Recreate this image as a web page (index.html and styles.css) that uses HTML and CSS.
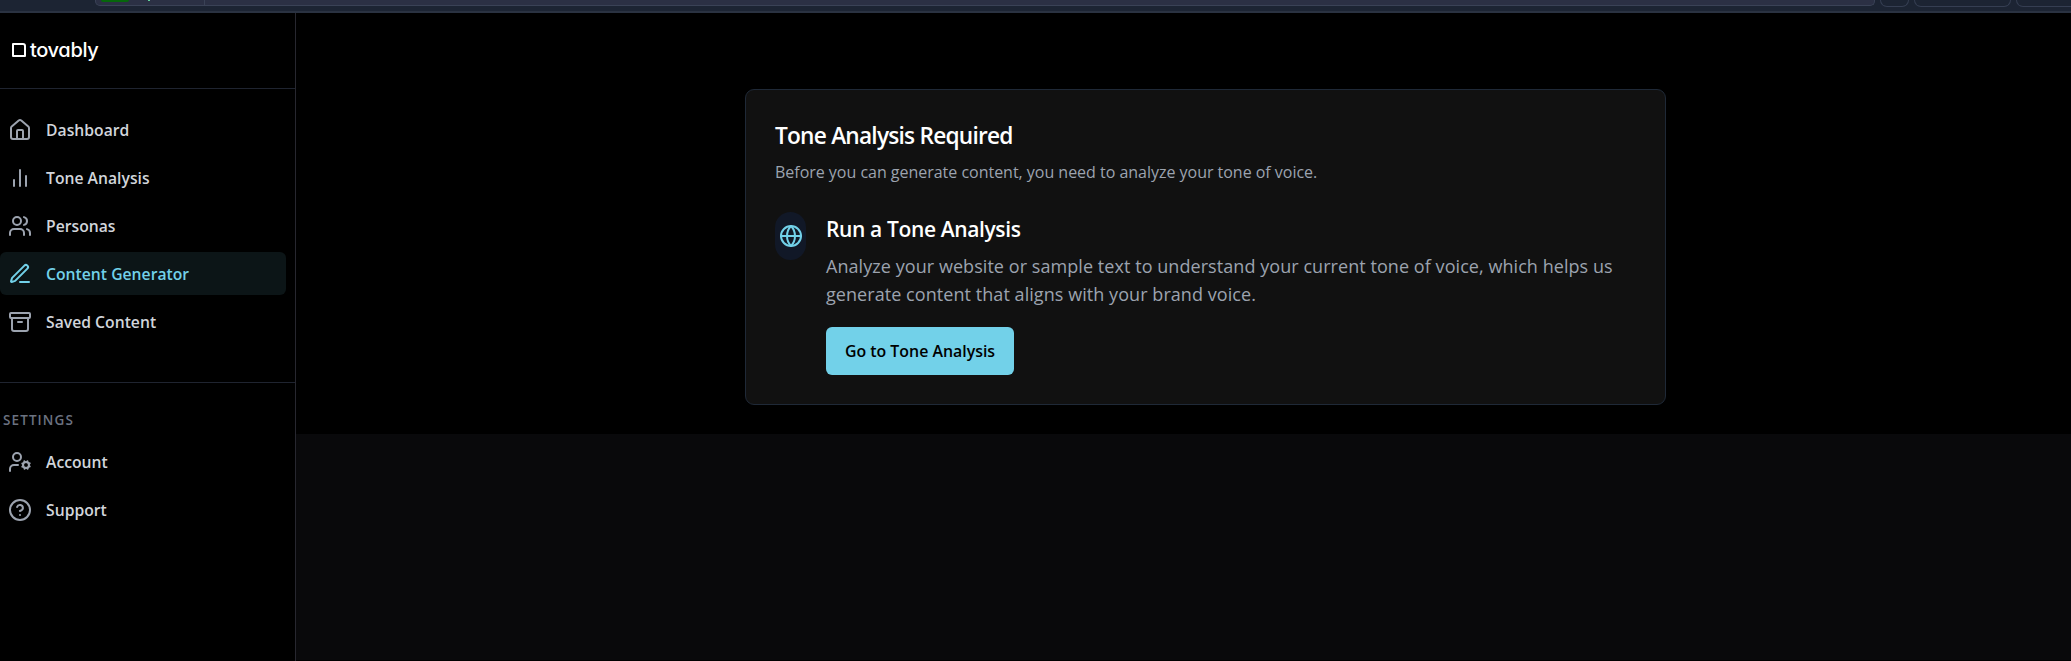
FILE: index.html
```html
<!DOCTYPE html>
<html lang="en">
<head>
<meta charset="utf-8">
<title>Tovably</title>
<link rel="stylesheet" href="styles.css">
</head>
<body>
<div class="browser-bar">
  <div class="address"><span class="secure"></span><span class="site-mark"></span><span class="url"></span></div>
  <span class="chip chip-small"></span><span class="chip chip-wide"></span><span class="chip chip-wide"></span>
</div>
<div class="app">
  <aside class="sidebar">
    <div class="brand"><span class="brand-mark"></span><span class="brand-name">tovably</span></div>
    <nav class="nav">
      <a class="item"><svg class="icon" viewBox="0 0 24 24"><path d="M15 21v-8a1 1 0 0 0-1-1h-4a1 1 0 0 0-1 1v8"/><path d="M3 10a2 2 0 0 1 .709-1.528l7-5.999a2 2 0 0 1 2.582 0l7 5.999A2 2 0 0 1 21 10v9a2 2 0 0 1-2 2H5a2 2 0 0 1-2-2z"/></svg><span>Dashboard</span></a>
      <a class="item"><svg class="icon" viewBox="0 0 24 24"><path d="M18 20V10M12 20V4M6 20v-6"/></svg><span>Tone Analysis</span></a>
      <a class="item"><svg class="icon" viewBox="0 0 24 24"><path d="M16 21v-2a4 4 0 0 0-4-4H6a4 4 0 0 0-4 4v2"/><circle cx="9" cy="7" r="4"/><path d="M22 21v-2a4 4 0 0 0-3-3.87M16 3.13a4 4 0 0 1 0 7.75"/></svg><span>Personas</span></a>
      <a class="item active"><svg class="icon" viewBox="0 0 24 24"><path d="M12 20h9"/><path d="M16.376 3.622a1 1 0 0 1 3.002 3.002L7.368 18.635a2 2 0 0 1-.855.506l-2.872.838a.5.5 0 0 1-.62-.62l.838-2.872a2 2 0 0 1 .506-.854z"/></svg><span>Content Generator</span></a>
      <a class="item"><svg class="icon" viewBox="0 0 24 24"><rect x="2" y="3" width="20" height="5" rx="1"/><path d="M4 8v11a2 2 0 0 0 2 2h12a2 2 0 0 0 2-2V8M10 12h4"/></svg><span>Saved Content</span></a>
    </nav>
    <div class="settings">
      <h2 class="settings-title">SETTINGS</h2>
      <a class="item"><svg class="icon" viewBox="0 0 24 24"><circle cx="18" cy="15" r="3"/><circle cx="9" cy="7" r="4"/><path d="M10 15H6a4 4 0 0 0-4 4v2M21.7 16.4l-.9-.3M15.2 13.9l-.9-.3M16.6 18.7l.3-.9M19.1 12.2l.3-.9M19.6 18.7l-.4-1M16.8 12.3l-.4-1M14.3 16.6l1-.4M20.7 13.8l1-.4"/></svg><span>Account</span></a>
      <a class="item"><svg class="icon" viewBox="0 0 24 24"><circle cx="12" cy="12" r="10"/><path d="M9.09 9a3 3 0 0 1 5.83 1c0 2-3 3-3 3M12 17h.01"/></svg><span>Support</span></a>
    </div>
  </aside>
  <main class="main">
    <div class="stage">
      <section class="card">
        <h1 class="title">Tone Analysis Required</h1>
        <p class="lead">Before you can generate content, you need to analyze your tone of voice.</p>
        <div class="step">
          <div class="pill"><svg class="icon" viewBox="0 0 24 24"><circle cx="12" cy="12" r="10"/><path d="M12 2a14.5 14.5 0 0 0 0 20 14.5 14.5 0 0 0 0-20M2 12h20"/></svg></div>
          <div class="step-body">
            <h2 class="step-title">Run a Tone Analysis</h2>
            <p class="copy">Analyze your website or sample text to understand your current tone of voice, which helps us<br>generate content that aligns with your brand voice.</p>
            <button class="button">Go to Tone Analysis</button>
          </div>
        </div>
      </section>
    </div>
  </main>
</div>
</body>
</html>
```
FILE: styles.css
```css
* { box-sizing: border-box; }
body { margin: 0; height: 661px; overflow: hidden; display: flex; flex-direction: column; background: #000; font-family: "Open Sans", "Noto Sans", sans-serif; color: #fff; }
h1, h2, p { margin: 0; }
.browser-bar { height: 13px; flex: none; display: flex; align-items: flex-start; background: #1c2433; border-bottom: 2px solid #2a3241; padding-left: 95px; overflow: hidden; }
.address { width: 1780px; height: 6px; flex: none; display: flex; background: #2b3044; border: 1px solid #3a4256; border-top: 0; border-radius: 0 0 5px 5px; margin-right: 5px; }
.secure { width: 28px; height: 2px; margin-left: 5px; background: #06660c; border-radius: 0 0 4px 4px; }
.site-mark { width: 2px; height: 1px; margin-left: 19px; background: #5fd39a; }
.url { width: 1px; height: 6px; margin-left: 54px; background: #3a4256; }
.chip { height: 7px; flex: none; border: 1px solid #353e52; border-top: 0; border-radius: 0 0 7px 7px; margin-right: 5px; }
.chip-small { width: 29px; }
.chip-wide { width: 97px; }
.app { flex: 1; display: flex; min-height: 0; }
.sidebar { width: 296px; flex: none; border-right: 1px solid #27272f; }
.brand { height: 76px; display: flex; align-items: center; gap: 4px; padding: 0 0 1px 12px; border-bottom: 1px solid #1f2430; }
.brand-mark { width: 14px; height: 14px; border: 2px solid #fff; border-radius: 1px 3px 1px 1px; }
.brand-name { font: 500 20px/24px Inter, sans-serif; font-feature-settings: "cv11"; letter-spacing: -0.35px; }
.nav { height: 294px; padding: 19px 9px 0 0; display: flex; flex-direction: column; gap: 5px; border-bottom: 1px solid #1f2430; }
.item { height: 43px; display: flex; align-items: center; gap: 14px; padding-left: 8px; border-radius: 6px; color: #d1d5db; font-size: 15.7px; font-weight: 600; letter-spacing: 0.02px; white-space: nowrap; }
.icon { width: 24px; height: 24px; flex: none; fill: none; stroke: #9ca3af; stroke-width: 2; stroke-linecap: round; stroke-linejoin: round; }
.active { background: #0c1517; color: #72d1e9; }
.active .icon, .pill .icon { stroke: #72d1e9; }
.settings { padding: 28px 9px 0 0; display: flex; flex-direction: column; gap: 5px; }
.settings-title { height: 24px; padding-left: 3px; font-size: 13.5px; line-height: 19px; font-weight: 600; letter-spacing: 1.1px; color: #6b7280; }
.main { flex: 1; margin-bottom: 1px; background: #09090b; }
.stage { height: 421px; background: #000; display: flex; justify-content: center; padding: 76px 0 0 44px; }
.card { width: 921px; height: 316px; padding: 28px 29px; border: 1px solid #1f2937; border-radius: 9px; background: #111; }
.title { font-size: 22.7px; line-height: 36px; font-weight: 600; letter-spacing: -0.78px; white-space: nowrap; }
.lead { padding-top: 5px; font-size: 16px; line-height: 26px; letter-spacing: -0.02px; color: #9ca3af; }
.step { display: flex; gap: 20px; padding-top: 27px; }
.pill { width: 31px; height: 48px; display: flex; align-items: center; justify-content: center; border-radius: 16px; background: #111827; }
.step-title { font-size: 21px; line-height: 34px; font-weight: 600; letter-spacing: -0.37px; }
.copy { padding-top: 6px; font-size: 18px; line-height: 28px; letter-spacing: 0.06px; color: #9ca3af; white-space: nowrap; }
.button { display: block; margin-top: 19px; width: 188px; height: 48px; padding: 0; border: 0; border-radius: 6px; background: #72d1e9; color: #000; font: 600 15.9px "Open Sans", sans-serif; white-space: nowrap; }
```
